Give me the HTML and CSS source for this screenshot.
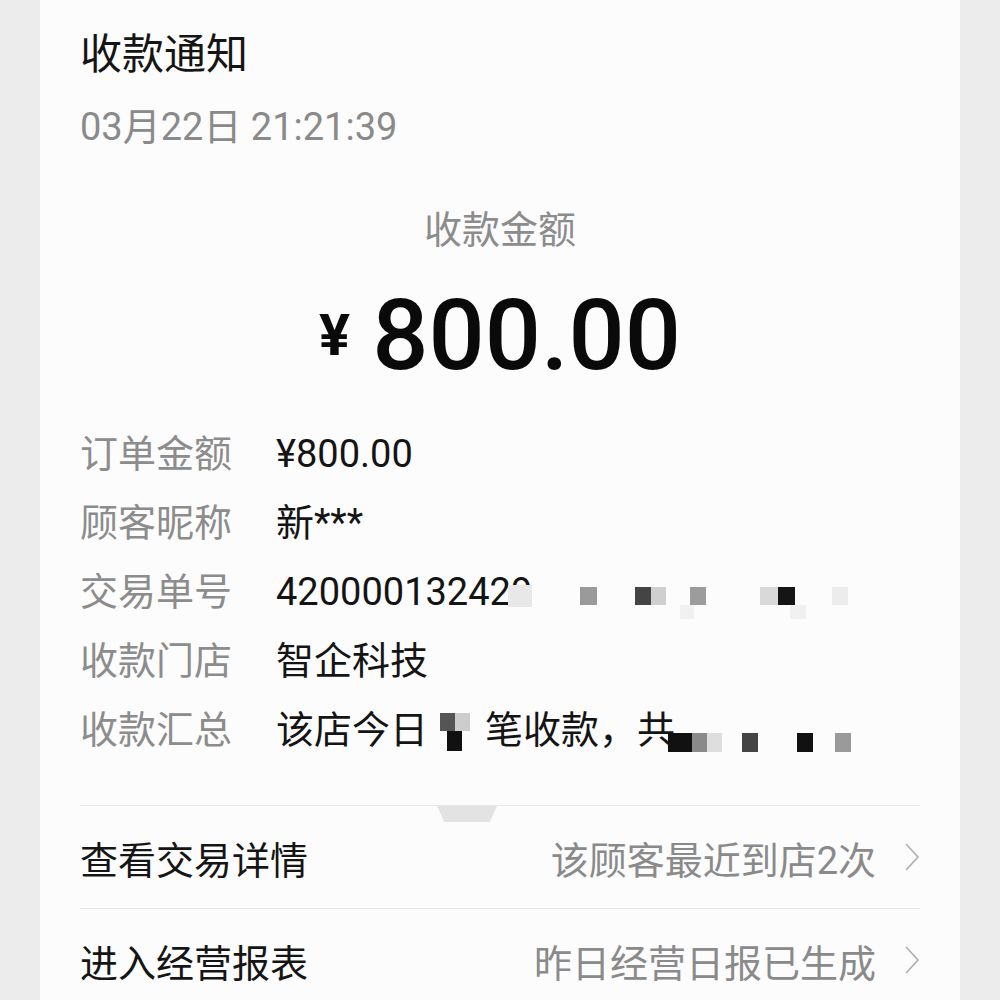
FILE: index.html
```html
<!DOCTYPE html>
<html lang="zh-CN">
<head>
<meta charset="utf-8">
<title>收款通知</title>
<link rel="stylesheet" href="styles.css">
</head>
<body>
<div class="card">
  <div class="head">
    <div class="title">收款通知</div>
    <div class="date">03月22日 21:21:39</div>
  </div>
  <div class="amount-label">收款金额</div>
  <div class="amount"><span class="yen">¥</span><span class="num">800.00</span></div>
  <div class="rows">
    <div class="row"><span class="label">订单金额</span><span class="value">¥800.00</span></div>
    <div class="row"><span class="label">顾客昵称</span><span class="value">新***</span></div>
    <div class="row"><span class="label">交易单号</span><span class="value">420000132429
      <i class="px l1" style="left:232px;top:27px;width:24px;height:22px"></i>
      <i class="px" style="left:304px;top:29px;width:17px;height:18px;background:#9a9a9a"></i>
      <i class="px" style="left:359px;top:29px;width:16px;height:18px;background:#444"></i>
      <i class="px" style="left:375px;top:29px;width:15px;height:18px;background:#cfcfcf"></i>
      <i class="px" style="left:414px;top:29px;width:16px;height:18px;background:#9c9c9c"></i>
      <i class="px" style="left:404px;top:47px;width:14px;height:14px;background:#f1f1f1"></i>
      <i class="px" style="left:484px;top:29px;width:18px;height:18px;background:#d9d9d9"></i>
      <i class="px" style="left:502px;top:29px;width:17px;height:18px;background:#151515"></i>
      <i class="px" style="left:514px;top:47px;width:16px;height:14px;background:#f1f1f1"></i>
      <i class="px" style="left:556px;top:29px;width:16px;height:18px;background:#ececec"></i>
    </span></div>
    <div class="row"><span class="label">收款门店</span><span class="value">智企科技</span></div>
    <div class="row"><span class="label">收款汇总</span><span class="value">该店今日<span class="gap"></span>笔收款，共
      <i class="px" style="left:164px;top:17px;width:15px;height:18px;background:#555"></i>
      <i class="px" style="left:179px;top:17px;width:15px;height:18px;background:#cdcdcd"></i>
      <i class="px" style="left:171px;top:35px;width:15px;height:20px;background:#111"></i>
      <i class="px" style="left:392px;top:37px;width:24px;height:19px;background:#111"></i>
      <i class="px" style="left:416px;top:37px;width:15px;height:19px;background:#8a8a8a"></i>
      <i class="px" style="left:431px;top:37px;width:15px;height:19px;background:#dedede"></i>
      <i class="px" style="left:466px;top:37px;width:16px;height:19px;background:#444"></i>
      <i class="px" style="left:521px;top:37px;width:16px;height:19px;background:#111"></i>
      <i class="px" style="left:559px;top:37px;width:16px;height:19px;background:#9a9a9a"></i>
    </span></div>
  </div>
  <div class="links">
    <span class="tab"></span>
    <div class="link"><span class="link-title">查看交易详情</span><span class="link-note">该顾客最近到店2次</span>
      <svg class="chev" width="16" height="30" viewBox="0 0 16 30"><path d="M2 2 L14 15 L2 28" fill="none" stroke="#b3b3b3" stroke-width="1.8"/></svg></div>
    <div class="link"><span class="link-title">进入经营报表</span><span class="link-note">昨日经营日报已生成</span>
      <svg class="chev" width="16" height="30" viewBox="0 0 16 30"><path d="M2 2 L14 15 L2 28" fill="none" stroke="#b3b3b3" stroke-width="1.8"/></svg></div>
  </div>
</div>
</body>
</html>
```

FILE: styles.css
```css
html, body {
  margin: 0;
  padding: 0;
  background: #ececec;
  height: 1000px;
  overflow: hidden;
}
body {
  font-family: Roboto, "Noto Sans CJK SC", sans-serif;
}
.card {
  margin: 0 40px;
  width: 840px;
  height: 1000px;
  background: #fcfcfc;
  padding: 0 40px;
}
.head {
  padding-top: 27px;
}
.title {
  font-size: 42px;
  line-height: 56px;
  color: #151515;
}
.date {
  margin-top: 16px;
  font-size: 38px;
  line-height: 56px;
  color: #8a8a8a;
}
.amount-label {
  margin-top: 47px;
  text-align: center;
  font-size: 38px;
  line-height: 56px;
  color: #8c8c8c;
}
.amount {
  margin-top: 22px;
  height: 110px;
  display: flex;
  justify-content: center;
  align-items: baseline;
  color: #0a0a0a;
  line-height: 110px;
}
.yen {
  font-size: 58px;
  font-weight: 700;
  margin-right: 22px;
  position: relative;
  top: -14px;
}
.num {
  font-size: 99px;
  font-weight: 500;
}
.rows {
  margin-top: 30px;
  padding-bottom: 40px;
  border-bottom: 1px solid #e6e6e6;
}
.row {
  display: flex;
  height: 69px;
  line-height: 69px;
  font-size: 38px;
}
.label {
  width: 196px;
  color: #8c8c8c;
}
.value {
  position: relative;
  color: #141414;
  white-space: nowrap;
}
.gap {
  display: inline-block;
  width: 57px;
}
.px {
  position: absolute;
  display: block;
}
.l1 {
  background: #e8e8e8;
}
.links {
  position: relative;
}
.tab {
  position: absolute;
  left: 357px;
  top: 0;
  width: 60px;
  height: 16px;
  background: #e3e3e3;
  clip-path: polygon(0 0, 100% 0, 88% 100%, 12% 100%);
}
.link {
  display: flex;
  align-items: center;
  height: 102px;
  font-size: 38px;
  border-bottom: 1px solid #e6e6e6;
}
.link-title {
  color: #151515;
  flex: 1;
}
.link-note {
  color: #8a8a8a;
  margin-right: 28px;
}
.chev {
  flex: none;
}
```
